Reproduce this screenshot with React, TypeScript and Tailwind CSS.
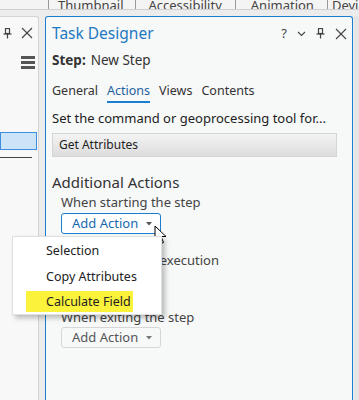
import React from 'react';

const PinIcon = () => (
  <svg width="9" height="11" viewBox="0 0 9 11" fill="none" stroke="#444" strokeWidth="1.2">
    <rect x="2.5" y="0.5" width="4" height="5" />
    <line x1="0.5" y1="6" x2="8.5" y2="6" />
    <line x1="4.5" y1="6" x2="4.5" y2="10.5" />
  </svg>
);

const CloseIcon = () => (
  <svg width="12" height="12" viewBox="0 0 12 12" stroke="#444" strokeWidth="1.1">
    <line x1="1" y1="1" x2="11" y2="11" />
    <line x1="11" y1="1" x2="1" y2="11" />
  </svg>
);

const Chevron = () => (
  <svg width="9" height="6" viewBox="0 0 9 6" fill="none" stroke="#444" strokeWidth="1.1">
    <polyline points="1,1 4.5,4.5 8,1" />
  </svg>
);

const Caret = ({ color }: { color: string }) => (
  <svg width="6" height="4" viewBox="0 0 6 4">
    <polygon points="0,0 6,0 3,3.5" fill={color} />
  </svg>
);

const Cursor = () => (
  <svg width="14" height="21" viewBox="0 0 14 21">
    <path d="M1 1 L1 16 L4.5 12.5 L7 18.5 L9.5 17.5 L7 11.5 L12 11.5 Z" fill="#fff" stroke="#000" strokeWidth="1" strokeLinejoin="round" />
  </svg>
);

const AddAction = ({ active }: { active?: boolean }) => (
  <div
    className={`flex items-center justify-between w-[100px] h-[21px] rounded-[3px] pl-[10px] pr-[8px] text-[13px] ${
      active ? 'border border-[#1a7fd0] bg-white text-[#1669b0]' : 'border border-[#d6d6d6] bg-[#f7f8f8] text-[#555]'
    }`}
  >
    <span>Add Action</span>
    <Caret color={active ? '#555' : '#777'} />
  </div>
);

export default function App() {
  return (
    <div
      className="relative w-[359px] h-[400px] overflow-hidden bg-[#ececec] text-[#333]"
      style={{ fontFamily: '"Noto Sans", "Open Sans", sans-serif' }}
    >
      {/* ribbon tabs, cut at the top */}
      <div className="h-[10px] bg-[#f4f4f4] border-b border-[#d0d0d0] overflow-hidden flex items-end text-[13px] text-[#444]">
        <div className="flex items-center -mb-[4px] leading-[16px] whitespace-nowrap">
          <span className="w-[49px] border-r border-[#999] h-[12px]" />
          <span className="pl-[9px] pr-[12px] border-r border-[#999]">Thumbnail</span>
          <span className="pl-[12px] pr-[13px] border-r border-[#999]">Accessibility</span>
          <span className="pl-[15px] pr-[13px] border-r border-[#999]">Animation</span>
          <span className="pl-[4px]">Device Location</span>
        </div>
      </div>

      <div className="flex pt-[6px] h-[390px]">
        {/* left dock pane */}
        <div className="w-[39px] shrink-0 bg-[#f8f8f8] border-t border-r border-[#d4d4d4] rounded-tr-[3px] flex flex-col">
          <div className="flex items-center gap-[9px] pl-[3px] pt-[8px] h-[24px]">
            <PinIcon />
            <CloseIcon />
          </div>
          <div className="flex flex-col gap-[2.5px] ml-[21px] mt-[15px] w-[14px]">
            <span className="h-[2.5px] bg-[#555]" />
            <span className="h-[2.5px] bg-[#555]" />
            <span className="h-[2.5px] bg-[#555]" />
          </div>
          <div className="mt-[63px] w-[37px] h-[18px] bg-[#cce4f7] border border-[#3d8ee0]" />
          <div className="mt-[7px] w-[32px] h-px bg-[#444]" />
        </div>

        {/* task designer pane */}
        <div className="ml-[6px] w-[308px] shrink-0 bg-[#f7f8f8] border-[1.5px] border-b-0 border-[#1a7fd0] rounded-t-[3px] pl-[6px] pr-[5px]">
          <div className="flex items-center justify-between h-[30px] pt-[3px]">
            <span className="text-[15.5px] text-[#1e79c2]">Task Designer</span>
            <div className="flex items-center gap-[10px] text-[#444]">
              <span className="text-[13px]">?</span>
              <Chevron />
              <PinIcon />
              <CloseIcon />
            </div>
          </div>
          <div className="mt-[3px] text-[13.5px] leading-[20px]">
            <span className="font-bold">Step:</span>
            <span className="ml-[5px]">New Step</span>
          </div>
          <div className="flex gap-[9px] mt-[12px] text-[12.5px] text-[#333] leading-[18px]">
            <span>General</span>
            <span className="text-[#1e5fa0] border-b-2 border-[#1a7fd0] pb-[1px]">Actions</span>
            <span>Views</span>
            <span>Contents</span>
          </div>
          <div className="mt-[6px] text-[13px] text-[#222] leading-[18px] whitespace-nowrap">
            Set the command or geoprocessing tool for...
          </div>
          <div className="mt-[6px] w-[285px] h-[24px] border border-[#d4d4d4] bg-gradient-to-b from-[#f4f4f4] to-[#dcdcdc] flex items-center pl-[6px] text-[12px] text-[#222]">
            Get Attributes
          </div>
          <div className="mt-[15px] text-[15px] text-[#333] leading-[20px]">Additional Actions</div>
          <div className="pl-[9px]">
            <div className="mt-[1px] text-[13px] leading-[18px] text-[#444]">When starting the step</div>
            <div className="mt-[2px]">
              <AddAction active />
            </div>
            <div className="mt-[17px] text-[13px] leading-[18px] text-[#444]">During the step execution</div>
            <div className="mt-[39px] text-[13px] leading-[18px] text-[#444]">When exiting the step</div>
            <div className="mt-[1px]">
              <AddAction />
            </div>
          </div>
        </div>
        <div className="ml-[1px] flex-1 bg-[#e6e6e6]" />
      </div>

      {/* cursor */}
      <div className="absolute left-[154px] top-[225px]">
        <Cursor />
      </div>

      {/* dropdown menu */}
      <div className="absolute left-[12px] top-[236px] w-[150px] h-[79px] bg-white border border-[#e0e0e0] shadow-[3px_3px_5px_rgba(0,0,0,0.25)] text-[12.5px] text-[#222] whitespace-nowrap">
        <div className="pl-[33px] pt-[5px] leading-[18px]">Selection</div>
        <div className="pl-[33px] mt-[8px] leading-[18px]">Copy Attributes</div>
        <div className="ml-[13px] mt-[5px] w-[107px] h-[21px] bg-[#fbf23c] pl-[20px] leading-[21px]">Calculate Field</div>
      </div>
    </div>
  );
}
